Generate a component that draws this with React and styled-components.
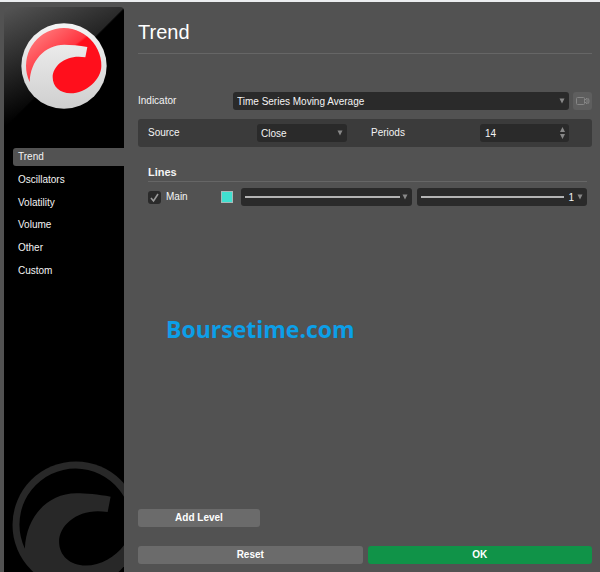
import React, { useState } from "react";
import styled, { createGlobalStyle } from "styled-components";

const GlobalStyle = createGlobalStyle`
  * {
    box-sizing: border-box;
  }

  body {
    margin: 0;
    background-color: #525252;
    color: #f4f4f4;
    font-family: "Liberation Sans", Arial, sans-serif;
    font-size: 10px;
    line-height: 18px;
  }

  button,
  input,
  select {
    margin: 0;
    border: none;
    color: inherit;
    font: inherit;
  }
`;

const Window = styled.div`
  display: flex;
  min-height: 100vh;
  border-top: 2px solid #eceef0;
`;

const Sidebar = styled.aside`
  display: flex;
  flex-direction: column;
  flex: 0 0 120px;
  margin: 5px 0 0 4px;
  overflow: hidden;
  border-radius: 4px 4px 0 0;
  background:
    linear-gradient(135deg, transparent 50%, #000000 51%) 0 0 / 120px 120px no-repeat,
    linear-gradient(155deg, #555555 0%, #000000 68%) 0 0 / 120px 120px no-repeat,
    #000000;
`;

const Logo = styled.svg`
  width: 86px;
  height: 86px;
  margin: 16px 0 0 17px;
`;

const Watermark = styled.svg`
  width: 112px;
  height: 111px;
  margin: auto 0 0 8px;
`;

const Nav = styled.nav`
  display: flex;
  flex-direction: column;
  justify-content: space-between;
  height: 132px;
  margin: 39px 0 20px 9px;
`;

const NavLink = styled.a`
  padding-left: 5px;
  border-radius: 3px 0 0 3px;
  background-color: ${(props) => (props.$active ? "#525252" : "transparent")};
  color: #f4f4f4;
  text-decoration: none;
`;

const Content = styled.main`
  display: flex;
  flex-direction: column;
  flex: 1;
  min-width: 0;
  padding: 18px 8px 8px 14px;
`;

const Title = styled.h1`
  margin: 0 0 38px;
  padding-bottom: 9px;
  border-bottom: 1px solid #666666;
  color: #ffffff;
  font-size: 20px;
  font-weight: normal;
  line-height: 24px;
`;

const IndicatorRow = styled.div`
  display: grid;
  grid-template-columns: 95px 1fr 23px;
  margin-bottom: 9px;
`;

const Panel = styled.div`
  display: grid;
  grid-template-columns: 109px 90px 24px 109px 89px;
  padding: 5px 10px;
  border-radius: 3px;
  background-color: #3b3b3b;

  & > label:nth-of-type(2) {
    grid-column: 4;
  }
`;

const LinesSection = styled.section`
  margin: 17px 5px 0 10px;
`;

const SectionTitle = styled.h2`
  margin: 0 0 6px;
  border-bottom: 1px solid #666666;
  font-size: 11px;
  font-weight: bold;
  line-height: 17px;
`;

const LineRow = styled.div`
  display: flex;
  align-items: center;
`;

const CheckLabel = styled.label`
  display: flex;
  align-items: center;
  flex: 0 0 73px;
  gap: 5px;
`;

const CheckBoxStack = styled.span`
  display: grid;

  & > * {
    grid-area: 1 / 1;
  }

  svg {
    pointer-events: none;
  }
`;

const Checkbox = styled.input`
  appearance: none;
  width: 13px;
  height: 13px;
  border-radius: 3px;
  background-color: #2a2a2a;
`;

const Swatch = styled.button`
  width: 12px;
  height: 12px;
  margin-right: 8px;
  padding: 0;
  border: 1px solid #a9b9b8;
  background-color: #40e0d0;
`;

const LineFields = styled.div`
  display: grid;
  grid-template-columns: 1fr 1fr;
  flex: 1;
  gap: 5px;
`;

/* The control fills the cell, the marks are laid over it */
const Field = styled.div`
  display: grid;
  align-items: center;
  min-width: 0;

  & > * {
    grid-area: 1 / 1;
  }

  & > svg {
    justify-self: end;
    margin-right: 4px;
    pointer-events: none;
  }
`;

const Select = styled.select`
  appearance: none;
  width: 100%;
  height: 18px;
  padding: 1px 13px 0 4px;
  border-radius: 3px;
  background-color: #2a2a2a;
  text-align-last: ${(props) => props.$align || "left"};
`;

const NumberInput = styled.input`
  appearance: textfield;
  width: 100%;
  height: 18px;
  padding: 1px 14px 0 5px;
  border-radius: 3px;
  background-color: #2a2a2a;

  &::-webkit-inner-spin-button {
    appearance: none;
  }
`;

const Stroke = styled.i`
  height: 2px;
  margin: 0 ${(props) => props.$end}px 0 4px;
  background-color: #b4b4b4;
  pointer-events: none;
`;

const Brand = styled.p`
  margin: 107px 0 40px 28px;
  color: #0c9fe8;
  font-family: "Open Sans", "Noto Sans", sans-serif;
  font-size: 23px;
  font-weight: bold;
  line-height: 32px;
`;

const Button = styled.button`
  height: 18px;
  padding: 0;
  border-radius: 3px;
  background-color: ${(props) => (props.$primary ? "#109348" : "#6b6b6b")};
  color: #ffffff;
  font-weight: bold;
`;

const AddButton = styled(Button)`
  width: 122px;
  margin: auto 0 19px;
`;

const RecordButton = styled.button`
  display: flex;
  align-items: center;
  justify-content: center;
  height: 18px;
  margin-left: 4px;
  padding: 0;
  border-radius: 3px;
  background-color: #5e5e5e;
`;

const Actions = styled.div`
  display: grid;
  grid-template-columns: 1fr 1fr;
  gap: 5px;
`;

const MARK =
  "M-103 48 A113 113 0 1 1 112 0 C112 40 66 82 20 82 C-12 82 -34 62 -34 34 C-34 -2 8 -36 64 -26 L70 -57 C45 -62 20 -64 1 -64 C-58 -64 -101 -15 -103 48 Z";

const categories = ["Trend", "Oscillators", "Volatility", "Volume", "Other", "Custom"];

const Arrow = () => (
  <svg width="6" height="6" viewBox="0 0 6 6" aria-hidden="true">
    <path d="M0.5 0.5h5L3 5.5z" fill="#888888" />
  </svg>
);

const App = () => {
  const [active, setActive] = useState("Trend");
  const [periods, setPeriods] = useState(14);
  const [visible, setVisible] = useState(true);

  return (
    <>
      <GlobalStyle />
      <Window>
        <Sidebar>
          <Logo viewBox="-129 -129 258 258" aria-hidden="true">
            <defs>
              <linearGradient id="disc" x1="0" y1="0" x2="0" y2="1">
                <stop offset="0" stopColor="#f4f4f4" />
                <stop offset="1" stopColor="#cfcfcf" />
              </linearGradient>
              <linearGradient id="red" x1="0.1" y1="0" x2="0.65" y2="0.6">
                <stop offset="0" stopColor="#ff8585" />
                <stop offset="0.68" stopColor="#ff3540" />
                <stop offset="0.72" stopColor="#ff0f1c" />
              </linearGradient>
            </defs>
            <circle r="128" fill="url(#disc)" />
            <path d={MARK} fill="url(#red)" />
          </Logo>

          <Nav>
            {categories.map((name) => (
              <NavLink
                key={name}
                href={`#${name.toLowerCase()}`}
                $active={name === active}
                onClick={() => setActive(name)}
              >
                {name}
              </NavLink>
            ))}
          </Nav>

          <Watermark viewBox="-129 -129 226 224" aria-hidden="true">
            <circle r="128" fill="#282828" />
            <path d={MARK} fill="#000000" />
          </Watermark>
        </Sidebar>

        <Content>
          <Title>{active}</Title>

          <IndicatorRow>
            <label htmlFor="indicator">Indicator</label>
            <Field>
              <Select id="indicator">
                <option>Time Series Moving Average</option>
              </Select>
              <Arrow />
            </Field>
            <RecordButton type="button" aria-label="Record">
              <svg width="14" height="10" viewBox="0 0 14 10" fill="none" stroke="#858585">
                <rect x="0.5" y="1.5" width="8" height="7" rx="1" />
                <path d="M9 4l2-2v6l-2-2M12.5 2.5q1 2.5 0 5" />
              </svg>
            </RecordButton>
          </IndicatorRow>

          <Panel>
            <label htmlFor="source">Source</label>
            <Field>
              <Select id="source">
                <option>Close</option>
              </Select>
              <Arrow />
            </Field>
            <label htmlFor="periods">Periods</label>
            <Field>
              <NumberInput
                id="periods"
                type="number"
                value={periods}
                onChange={(e) => setPeriods(e.target.value)}
              />
              <svg width="5" height="14" viewBox="0 0 5 14" aria-hidden="true">
                <path d="M0 6h5L2.5 1zM0 8h5L2.5 13z" fill="#888888" />
              </svg>
            </Field>
          </Panel>

          <LinesSection>
            <SectionTitle>Lines</SectionTitle>
            <LineRow>
              <CheckLabel>
                <CheckBoxStack>
                  <Checkbox
                    type="checkbox"
                    checked={visible}
                    onChange={(e) => setVisible(e.target.checked)}
                  />
                  {visible && (
                    <svg width="13" height="13" viewBox="0 0 13 13" fill="none">
                      <path d="M3 7l2.5 3L10 3" stroke="#9a9a9a" strokeWidth="1.6" />
                    </svg>
                  )}
                </CheckBoxStack>
                Main
              </CheckLabel>
              <Swatch type="button" aria-label="Line color" />
              <LineFields>
                <Field>
                  <Select aria-label="Line style">
                    <option value="solid" />
                  </Select>
                  <Stroke $end={12} />
                  <Arrow />
                </Field>
                <Field>
                  <Select aria-label="Line width" $align="right">
                    <option>1</option>
                  </Select>
                  <Stroke $end={23} />
                  <Arrow />
                </Field>
              </LineFields>
            </LineRow>
          </LinesSection>

          <Brand>Boursetime.com</Brand>

          <AddButton type="button">Add Level</AddButton>
          <Actions>
            <Button type="button">Reset</Button>
            <Button type="button" $primary>
              OK
            </Button>
          </Actions>
        </Content>
      </Window>
    </>
  );
};

export default App;
